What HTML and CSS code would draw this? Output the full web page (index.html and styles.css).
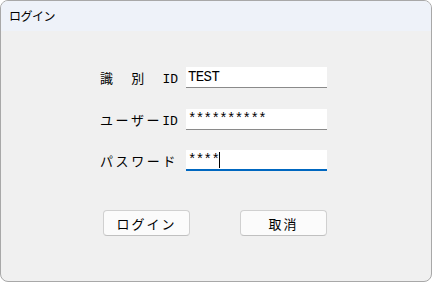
FILE: index.html
```html
<!DOCTYPE html>
<html lang="ja">
<head>
  <meta charset="UTF-8" />
  <title>ログイン</title>
  <link rel="stylesheet" href="styles.css">
</head>
<body>
  <div class="window">
    <div class="titlebar">ログイン</div>
    <div class="content">
      <div class="form">
        <div class="row">
          <label class="label">識　別　<span class="half">ID</span></label>
          <div class="field">TEST</div>
        </div>
        <div class="row">
          <label class="label">ユーザー<span class="half">ID</span></label>
          <div class="field">**********</div>
        </div>
        <div class="row">
          <label class="label">パスワード</label>
          <div class="field active">****<span class="caret"></span></div>
        </div>
      </div>
      <div class="buttons">
        <button class="btn">ログイン</button>
        <button class="btn">取消</button>
      </div>
    </div>
  </div>
</body>
</html>
```

FILE: styles.css
```css
html, body {
  margin: 0;
  padding: 0;
  background: #ffffff;
}
body {
  width: 432px;
  height: 282px;
  overflow: hidden;
  font-family: "Noto Sans CJK JP", sans-serif;
}
.window {
  box-sizing: border-box;
  width: 432px;
  height: 282px;
  border: 1px solid #a8a8a8;
  border-radius: 8px;
  background: #f0f0f0;
  overflow: hidden;
  display: flex;
  flex-direction: column;
}
.titlebar {
  height: 30px;
  background: #eef2f9;
  font-size: 12px;
  line-height: 30px;
  padding-left: 8px;
  color: #000;
  letter-spacing: -0.5px;
}
.content {
  flex: 1;
  display: flex;
  flex-direction: column;
  padding-left: 99px;
}
.form {
  margin-top: 36px;
  display: flex;
  flex-direction: column;
  gap: 20.5px;
}
.row {
  display: flex;
  align-items: center;
  height: 21px;
}
.label {
  width: 86px;
  font-size: 13px;
  letter-spacing: 2.6px;
  color: #000;
  white-space: nowrap;
}
.half {
  font-family: "Liberation Mono", monospace;
  font-size: 13px;
  letter-spacing: 0;
}
.field {
  box-sizing: border-box;
  width: 141px;
  height: 21px;
  background: #ffffff;
  border-bottom: 1px solid #8a8a8a;
  font-family: "Liberation Mono", monospace;
  font-size: 14px;
  letter-spacing: -0.6px;
  line-height: 20px;
  padding-left: 2px;
  color: #000;
  display: flex;
  align-items: center;
}
.field.active {
  border-bottom: 2px solid #0067c0;
}
.caret {
  display: inline-block;
  width: 1px;
  height: 16px;
  background: #000;
}
.buttons {
  margin-top: 39px;
  margin-left: 3px;
  display: flex;
  gap: 50px;
}
.btn {
  box-sizing: border-box;
  width: 87px;
  height: 26px;
  background: #fbfbfb;
  border: 1px solid #d0d0d0;
  border-bottom-color: #c0c0c0;
  border-radius: 4px;
  font-family: "Noto Sans CJK JP", sans-serif;
  font-size: 13px;
  letter-spacing: 2px;
  color: #000;
  padding: 0;
}
```
